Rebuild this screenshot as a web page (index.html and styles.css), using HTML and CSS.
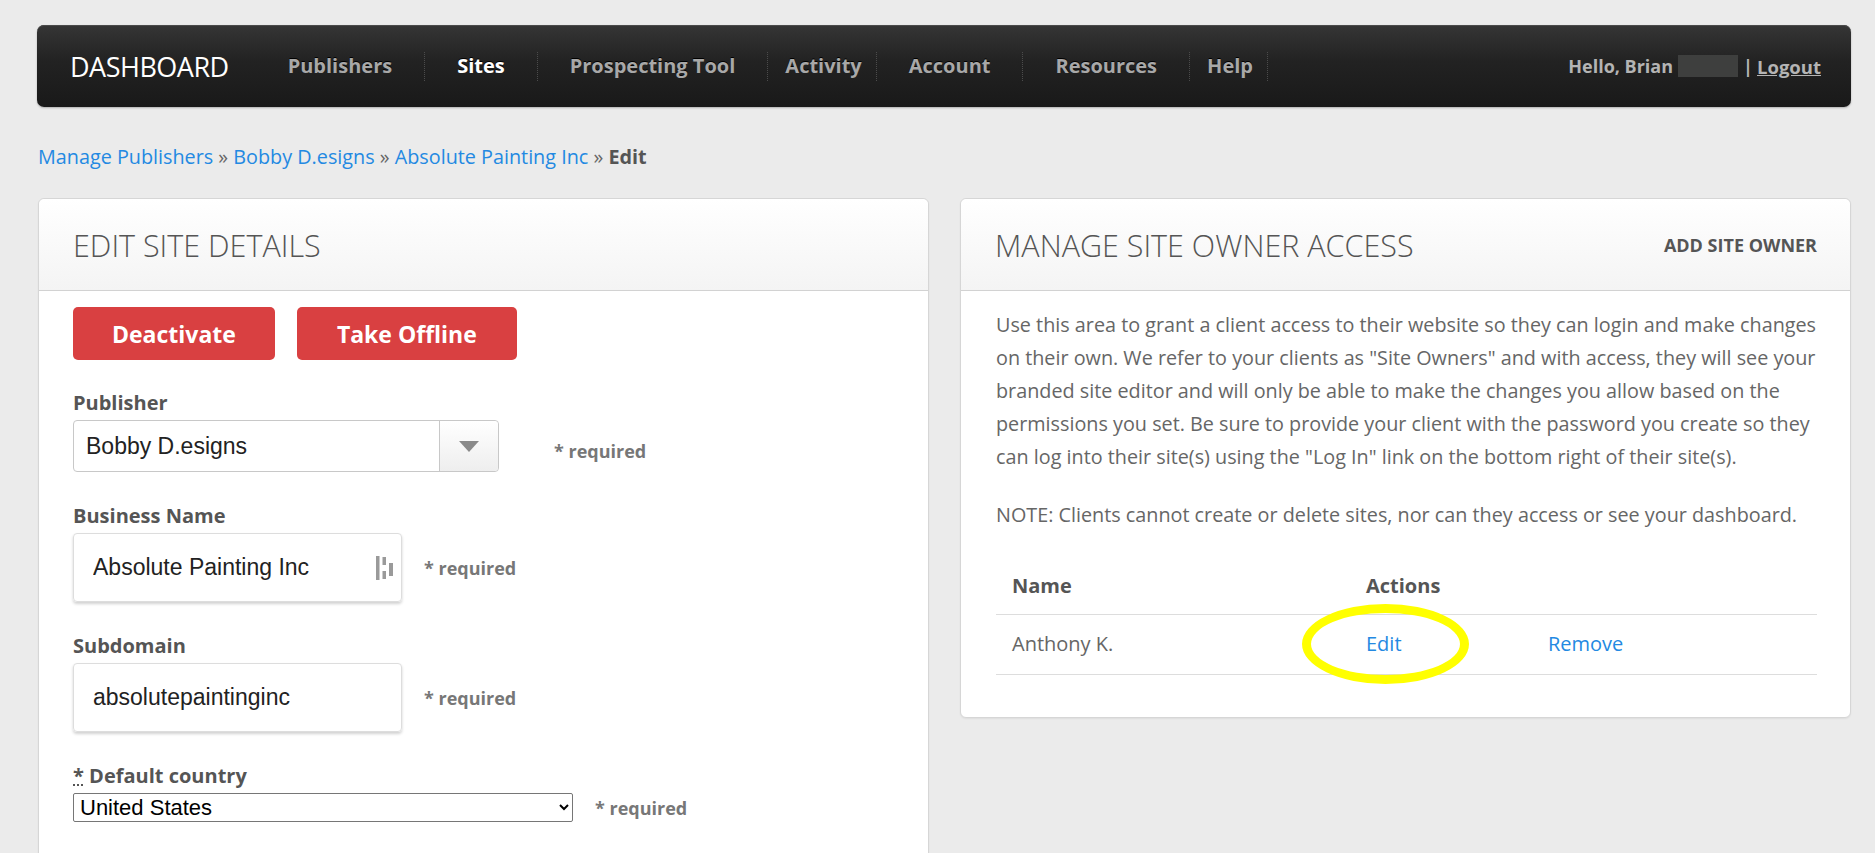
FILE: index.html
```html
<!DOCTYPE html>
<html lang="en">
<head>
  <meta charset="UTF-8" /><meta name="viewport" content="width=device-width,initial-scale=1">
  <title>Edit Site - Dashboard</title>
  <link rel="stylesheet" href="styles.css">
</head>
<body>
  <div class="page">
    <nav class="topbar">
      <a href="#" class="brand">DASHBOARD</a>
      <ul class="menu">
        <li><a href="#">Publishers</a></li>
        <li class="active"><a href="#">Sites</a></li>
        <li><a href="#">Prospecting Tool</a></li>
        <li class="tight"><a href="#">Activity</a></li>
        <li><a href="#">Account</a></li>
        <li><a href="#">Resources</a></li>
        <li class="tight"><a href="#">Help</a></li>
      </ul>
      <div class="user">
        Hello, Brian <span class="hidden-name"></span><span class="pipe">|</span> <a href="#">Logout</a>
      </div>
    </nav>

    <div class="crumbs">
      <a href="#">Manage Publishers</a> &raquo; <a href="#">Bobby D.esigns</a> &raquo; <a href="#">Absolute Painting Inc</a> &raquo; <b>Edit</b>
    </div>

    <div class="columns">
      <section class="panel">
        <div class="panel-head">
          <h2>EDIT SITE DETAILS</h2>
        </div>
        <div class="panel-body form-body">
          <div class="actions-row">
            <button class="btn-red">Deactivate</button>
            <button class="btn-red">Take Offline</button>
          </div>

          <div class="field">
            <label>Publisher</label>
            <div class="control-row">
              <div class="fake-select">
                <span class="fs-value">Bobby D.esigns</span>
                <span class="fs-arrow"><i></i></span>
              </div>
              <span class="req req-wide">* required</span>
            </div>
          </div>

          <div class="field">
            <label>Business Name</label>
            <div class="control-row">
              <div class="text-box">
                <input type="text" value="Absolute Painting Inc">
                <svg class="pw-icon" width="18" height="24" viewBox="0 0 18 24">
                  <rect x="0" y="0" width="3.5" height="24" fill="#9a9a9a"/>
                  <rect x="6.5" y="1" width="3.5" height="8" fill="#9a9a9a"/>
                  <rect x="6.5" y="15" width="3.5" height="8" fill="#9a9a9a"/>
                  <rect x="13" y="7" width="4" height="13" fill="#9a9a9a"/>
                </svg>
              </div>
              <span class="req">* required</span>
            </div>
          </div>

          <div class="field">
            <label>Subdomain</label>
            <div class="control-row">
              <div class="text-box">
                <input type="text" value="absolutepaintinginc">
              </div>
              <span class="req">* required</span>
            </div>
          </div>

          <div class="field">
            <label><abbr title="required">*</abbr> Default country</label>
            <div class="control-row">
              <select class="country">
                <option>United States</option>
                <option>Canada</option>
              </select>
              <span class="req">* required</span>
            </div>
          </div>
        </div>
      </section>

      <section class="panel">
        <div class="panel-head">
          <h2>MANAGE SITE OWNER ACCESS</h2>
          <a href="#" class="head-link">ADD SITE OWNER</a>
        </div>
        <div class="panel-body info-body">
          <p>Use this area to grant a client access to their website so they can login and make changes on their own. We refer to your clients as "Site Owners" and with access, they will see your branded site editor and will only be able to make the changes you allow based on the permissions you set. Be sure to provide your client with the password you create so they can log into their site(s) using the "Log In" link on the bottom right of their site(s).</p>
          <p>NOTE: Clients cannot create or delete sites, nor can they access or see your dashboard.</p>
          <table class="owners">
            <thead>
              <tr><th class="c-name">Name</th><th class="c-edit">Actions</th><th></th></tr>
            </thead>
            <tbody>
              <tr>
                <td>Anthony K.</td>
                <td class="c-edit"><a href="#">Edit</a><span class="ring"></span></td>
                <td><a href="#">Remove</a></td>
              </tr>
            </tbody>
          </table>
        </div>
      </section>
    </div>
  </div>
</body>
</html>
```

FILE: styles.css
```css
* { box-sizing: border-box; }
body {
  margin: 0;
  font-family: "Open Sans", "Liberation Sans", sans-serif;
  color: #555;
  background: #ebebeb;
  overflow: hidden;
}
a { color: #2389e2; text-decoration: none; }
.page { padding: 25px 24px 0 37px; }

/* top bar */
.topbar {
  height: 82px;
  display: flex; align-items: center;
  background: linear-gradient(to bottom, #353535 0%, #222 45%, #191919 100%);
  border-radius: 7px;
  box-shadow: inset 0 1px 0 #4a4a4a, 0 1px 2px rgba(0,0,0,0.25);
  padding: 0 30px 0 33px;
}
.brand {
  color: #fff; font-size: 27px; letter-spacing: -0.5px;
  margin-right: 43px;
}
.menu { list-style: none; margin: 0; padding: 0; display: flex; align-items: center; }
.menu li {
  padding: 0 32px;
  border-right: 1px dotted #4c4c4c;
  line-height: 28px;
}
.menu li:first-child { padding-left: 16px; }
.menu li.tight { padding-left: 17px; padding-right: 14px; }
.menu a {
  color: #a8a8a8; font-weight: 700; font-size: 20px;
  text-shadow: 0 -1px 0 #000;
}
.menu li.active a { color: #fff; }
.user {
  margin-left: auto;
  color: #b4b4b4; font-weight: 700; font-size: 18px;
  display: flex; align-items: center;
}
.hidden-name {
  display: inline-block; width: 60px; height: 22px;
  background: #3e3f3e; margin-left: 5px;
}
.pipe { margin: 0 4px 0 5px; }
.user a { color: #b4b4b4; text-decoration: underline; font-size: 18.5px; }

/* breadcrumb */
.crumbs {
  font-size: 19.8px; line-height: 26px;
  margin: 37px 0 0 1px;
  color: #666;
}
.crumbs b { color: #555; }

/* panels */
.columns {
  display: grid; grid-template-columns: 1fr 1fr; gap: 31px;
  margin: 28px 0 0 1px;
  align-items: start;
}
.panel {
  background: #fff;
  border: 1px solid #d6d6d6;
  border-radius: 6px;
  box-shadow: 0 1px 2px rgba(0,0,0,0.06);
}
.panel-head {
  height: 92px;
  display: flex; align-items: center; justify-content: space-between;
  padding: 0 33px 0 34px;
  background: linear-gradient(to bottom, #fff, #f4f4f4);
  border-bottom: 1px solid #d2d2d2;
  border-radius: 6px 6px 0 0;
}
.panel-head h2 {
  margin: 0; font-weight: 300; font-size: 30.5px; color: #555;
}
.head-link { color: #555; font-weight: 700; font-size: 18px; }

/* edit form */
.form-body { padding: 16px 34px 40px; }
.actions-row { display: flex; gap: 22px; margin-bottom: 32px; }
.btn-red {
  height: 53px; padding: 0 39px;
  background: #d94041; color: #fff;
  border: none; border-radius: 5px;
  font-family: "Open Sans", sans-serif; font-weight: 700; font-size: 23px;
}
.btn-red + .btn-red { padding: 0 40px; }
.field { margin-bottom: 33px; }
.field label {
  display: block; font-weight: 700; font-size: 20px; line-height: 22px;
  color: #555; margin-bottom: 6px;
}
.field abbr { text-decoration: underline dotted; }
.control-row { display: flex; align-items: center; }
.req { font-weight: 700; font-size: 18px; color: #777; margin-left: 22px; }
.req-wide { margin-left: 55px; padding-top: 10px; }

.fake-select {
  width: 426px; height: 52px;
  display: flex;
  border: 1px solid #c8c8c8; border-radius: 4px;
  background: #fff;
}
.fs-value {
  flex: 1; display: flex; align-items: center; padding-left: 12px;
  font-family: "Liberation Sans", Arial, sans-serif; font-size: 23px; color: #222;
}
.fs-arrow {
  width: 59px; border-left: 1px solid #c8c8c8;
  background: linear-gradient(to bottom, #fff, #eee);
  border-radius: 0 4px 4px 0;
  display: flex; align-items: center; justify-content: center;
}
.fs-arrow i {
  width: 0; height: 0;
  border-left: 10px solid transparent; border-right: 10px solid transparent;
  border-top: 11px solid #8a8a8a;
}

.text-box {
  width: 329px; height: 69px;
  display: flex; align-items: center;
  border: 1px solid #ddd; border-radius: 4px;
  box-shadow: 0 2px 3px rgba(0,0,0,0.18);
  padding: 0 7px 0 19px;
}
.text-box input {
  flex: 1; min-width: 0; border: none; outline: none; padding: 0;
  font-family: "Liberation Sans", Arial, sans-serif; font-size: 23px; color: #222;
}
.pw-icon { flex: none; }

.country {
  width: 500px; height: 29px;
  font-family: "Liberation Sans", Arial, sans-serif; font-size: 22px; color: #000;
  border: 1px solid #767676; border-radius: 2px; background: #fff;
  padding: 0 2px;
}

/* site owner panel */
.info-body { padding: 17px 27px 42px 35px; }
.info-body p {
  margin: 0 0 25px; font-size: 19.8px; line-height: 33px; color: #666;
}
.info-body p + p { margin-bottom: 30px; }
.owners { width: calc(100% - 6px); border-collapse: collapse; font-size: 20px; }
.owners th {
  text-align: left; font-weight: 700; color: #555;
  padding: 12px 16px 15px; line-height: 26px;
  border-bottom: 1px solid #ddd;
}
.owners td {
  padding: 16px 16px 17px; line-height: 26px; color: #666;
  border-bottom: 1px solid #ddd;
}
.owners .c-name { width: 370px; }
.owners .c-edit { width: 182px; padding-left: 0; position: relative; }
.owners tr > :last-child { padding-left: 0; }
.ring {
  position: absolute; left: -64px; top: -11px;
  width: 167px; height: 80px;
  border: 9px solid #ffff00; border-radius: 50%;
}
```
